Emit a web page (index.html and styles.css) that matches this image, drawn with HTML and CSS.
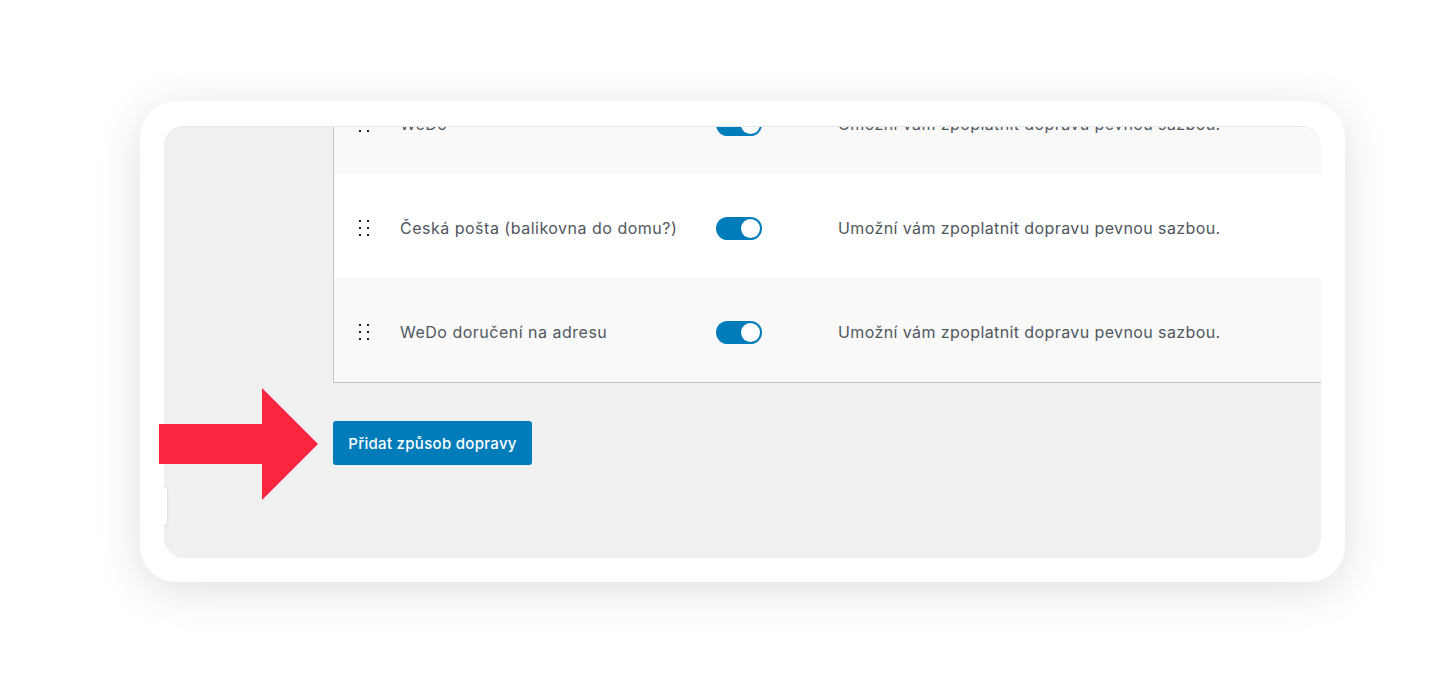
FILE: index.html
```html
<!DOCTYPE html>
<html lang="cs">
<head>
<meta charset="utf-8">
<title>Způsoby dopravy</title>
<link rel="stylesheet" href="styles.css">
</head>
<body>
<div class="frame">
  <div class="viewport">
    <div class="side-tab"></div>
    <div class="content">
      <div class="table">
        <div class="row alt">
          <div class="handle"><span></span><span></span><span></span><span></span><span></span><span></span></div>
          <div class="name">WeDo</div>
          <div class="toggle-cell"><span class="toggle"><span class="knob"></span></span></div>
          <div class="desc">Umožní vám zpoplatnit dopravu pevnou sazbou.</div>
        </div>
        <div class="row">
          <div class="handle"><span></span><span></span><span></span><span></span><span></span><span></span></div>
          <div class="name">Česká pošta (balikovna do domu?)</div>
          <div class="toggle-cell"><span class="toggle"><span class="knob"></span></span></div>
          <div class="desc">Umožní vám zpoplatnit dopravu pevnou sazbou.</div>
        </div>
        <div class="row alt">
          <div class="handle"><span></span><span></span><span></span><span></span><span></span><span></span></div>
          <div class="name">WeDo doručení na adresu</div>
          <div class="toggle-cell"><span class="toggle"><span class="knob"></span></span></div>
          <div class="desc">Umožní vám zpoplatnit dopravu pevnou sazbou.</div>
        </div>
      </div>
      <button class="add-btn" type="button">Přidat způsob dopravy</button>
    </div>
  </div>
</div>
<svg class="arrow" width="160" height="113" viewBox="0 0 160 113" aria-hidden="true">
  <polygon points="0,36 103,36 103,0 159,56 103,112 103,76 0,76" fill="#fa2640"/>
</svg>
</body>
</html>
```

FILE: styles.css
```css
* { box-sizing: border-box; }

html, body {
  margin: 0;
  padding: 0;
  background: #ffffff;
  font-family: Inter, "Noto Sans", "Liberation Sans", sans-serif;
}

body {
  position: relative;
  width: 1447px;
  height: 685px;
  overflow: hidden;
  padding-top: 101px;
  padding-left: 140px;
}

.frame {
  width: 1205px;
  height: 481px;
  padding: 25px 24px 24px 24px;
  background: #ffffff;
  border-radius: 36px;
  box-shadow: 0 8px 45px rgba(0, 0, 0, 0.13);
}

.viewport {
  position: relative;
  width: 100%;
  height: 100%;
  background: #f0f0f1;
  border-radius: 20px;
  overflow: hidden;
  border-top: 1px solid #e6e6e7;
}

.side-tab {
  position: absolute;
  left: -10px;
  top: 359px;
  width: 14px;
  height: 40px;
  background: #ffffff;
  border: 1px solid #e2e2e4;
  border-radius: 3px;
  box-shadow: 0 1px 2px rgba(0, 0, 0, 0.05);
}

.content {
  padding-left: 169px;
  margin-top: -57px;
}

.table {
  width: 1120px;
  border-left: 1px solid #c3c4c7;
  border-bottom: 1px solid #c3c4c7;
  background: #ffffff;
}

.row {
  display: grid;
  grid-template-columns: 41px 316px 122px 1fr;
  align-items: center;
  height: 104px;
  padding-left: 25px;
  padding-top: 4px;
  background: #ffffff;
}

.row.alt {
  background: #f9f9f9;
}

.handle {
  display: grid;
  grid-template-columns: 2px 2px;
  column-gap: 6px;
  row-gap: 5px;
  width: 10px;
}

.handle span {
  width: 2px;
  height: 2px;
  background: #1e1e1e;
}

.name,
.desc {
  font-size: 16px;
  color: #50575e;
  letter-spacing: 0.4px;
  white-space: nowrap;
}

.name {
  letter-spacing: 0.5px;
}

.toggle-cell {
  display: flex;
  align-items: center;
}

.toggle {
  position: relative;
  display: block;
  width: 46px;
  height: 23px;
  border-radius: 12px;
  background: #007cba;
}

.knob {
  position: absolute;
  right: 2px;
  top: 2px;
  width: 19px;
  height: 19px;
  border-radius: 50%;
  background: #ffffff;
}

.add-btn {
  display: block;
  margin-top: 38px;
  height: 44px;
  width: 199px;
  padding: 0;
  border: 0;
  border-radius: 3px;
  background: #007cba;
  color: #ffffff;
  font-family: Inter, "Noto Sans", "Liberation Sans", sans-serif;
  font-size: 15px;
  font-weight: 500;
  letter-spacing: 0.3px;
  text-align: center;
}

.arrow {
  position: absolute;
  left: 159px;
  top: 388px;
}
```
